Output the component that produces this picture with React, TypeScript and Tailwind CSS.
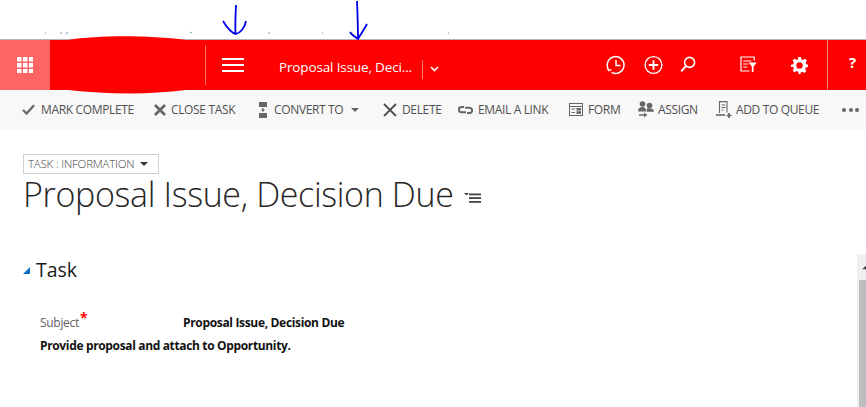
import React from "react";

const font = "font-['Open_Sans','Noto_Sans',sans-serif]";

function ToolItem({ icon, label, w, ml, iw, gap = "mr-[5px]" }: { icon: React.ReactNode; label: string; w: string; ml: string; iw: string; gap?: string }) {
  return (
    <div className={`flex items-center shrink-0 ${ml}`}>
      <div className={`flex items-center justify-center shrink-0 ${iw} ${gap}`}>{icon}</div>
      <span className={`text-[12px] leading-[16px] text-[#505050] whitespace-nowrap tracking-[-0.35px] ${w}`}>{label}</span>
    </div>
  );
}

export default function App() {
  return (
    <div className={`relative w-[866px] h-[407px] overflow-hidden bg-white ${font}`}>
      {/* top strip */}
      <div className="h-[39px] bg-white" />
      <div className="h-px bg-[#b4b4b4]" />

      {/* nav bar */}
      <div className="flex h-[50px] bg-[#ff0000] text-white">
        <div className="flex w-[50px] items-center justify-center bg-[#ff6464]">
          <svg width="16" height="16" viewBox="0 0 16 16" fill="#fff">
            {[0, 6, 12].flatMap((x) => [0, 6, 12].map((y) => <rect key={`${x}-${y}`} x={x} y={y} width="4.5" height="4.5" />))}
          </svg>
        </div>
        <div className="w-[155px]" />
        <div className="my-[5px] w-px bg-[#ff6a6a]" />
        <div className="ml-[16px] flex w-[22px] flex-col gap-[4px] pt-[18px]">
          <div className="h-[2px] bg-white" />
          <div className="h-[2px] bg-white" />
          <div className="h-[2px] bg-white" />
        </div>
        <div className="ml-[35px] w-[143px] pt-[17px] text-[13.5px] leading-[20px] tracking-[-0.15px] whitespace-nowrap">Proposal Issue, Deci...</div>
        <div className="mt-[20px] mb-[11px] w-px bg-[#ff7a7a]" />
        <div className="ml-[7px] pt-[26px]">
          <svg width="9" height="6" viewBox="0 0 9 6" fill="none" stroke="#fff" strokeWidth="1.6"><path d="M1 1l3.5 3.5L8 1" /></svg>
        </div>
        <div className="ml-[167px] pt-[15px]">
          <svg width="20" height="20" viewBox="0 0 20 20" fill="none" stroke="#fff" strokeWidth="1.5">
            <path d="M3 15.2A8.4 8.4 0 1 1 5.6 17.4" />
            <path d="M10 5v5.5h4.5" />
            <path d="M1.3 13.6l1.8 2.2 2.4-1.4" strokeWidth="1.2" />
          </svg>
        </div>
        <div className="ml-[18px] pt-[15px]">
          <svg width="19" height="20" viewBox="0 0 19 20" fill="none" stroke="#fff" strokeWidth="1.4">
            <circle cx="9.5" cy="10" r="8.4" />
            <path d="M4.8 10h9.4M9.5 5.3v9.4" strokeWidth="1.9" />
          </svg>
        </div>
        <div className="ml-[17px] pt-[16px]">
          <svg width="16" height="17" viewBox="0 0 16 17" fill="none" stroke="#fff" strokeWidth="1.6">
            <circle cx="9.6" cy="6.4" r="5" />
            <path d="M6 10L1.2 15.4" strokeWidth="2" />
          </svg>
        </div>
        <div className="ml-[44px] pt-[16px]">
          <svg width="17" height="17" viewBox="0 0 17 17" fill="none" stroke="#fff" strokeWidth="1.2">
            <path d="M14.2 4.5V1H1v14h8.5" />
            <path d="M3.2 5h8M3.2 8h5M3.2 11h4" />
            <path d="M8.6 6.5h8.2l-3.2 4v5l-1.8 1v-6z" fill="#fff" stroke="none" />
          </svg>
        </div>
        <div className="ml-[34px] pt-[17px]">
          <svg width="17" height="17" viewBox="0 0 24 24" fill="#fff">
            <path fillRule="evenodd" d="M10 0h4l.7 3.2 2.2.9L19.7 2.3l2.8 2.8-1.8 2.8.9 2.2L24 10.8v3.4l-3.2.7-.9 2.2 1.8 2.8-2.8 2.8-2.8-1.8-2.2.9L13.2 24h-2.4l-.7-3.2-2.2-.9-2.8 1.8-2.8-2.8 1.8-2.8-.9-2.2L0 14.2v-3.4l3.2-.7.9-2.2-1.8-2.8 2.8-2.8 2.8 1.8 2.2-.9zM12 7.5a4.5 4.5 0 1 0 0 9 4.5 4.5 0 0 0 0-9z" />
          </svg>
        </div>
        <div className="ml-[19px] w-px bg-[#ff7a7a]" />
        <div className="ml-[21px] pt-[12px] text-[15px] font-bold leading-[20px]">?</div>
      </div>

      {/* command bar */}
      <div className="flex h-[40px] items-center bg-[#f8f8f8] pb-[1px]">
        <ToolItem ml="ml-[22px]" iw="w-[13px]" gap="mr-[6px]" w="w-[94px]" label="MARK COMPLETE" icon={
          <svg width="13" height="11" viewBox="0 0 13 11" fill="none" stroke="#666" strokeWidth="2.2"><path d="M1 6l3.6 3.6L12 1.2" /></svg>} />
        <ToolItem ml="ml-[19px]" iw="w-[12px]" w="w-[67px]" label="CLOSE TASK" icon={
          <svg width="12" height="12" viewBox="0 0 12 12" stroke="#666" strokeWidth="2.8"><path d="M1 1l10 10M11 1L1 11" /></svg>} />
        <ToolItem ml="ml-[21px]" iw="w-[8px]" gap="mr-[7px]" w="w-[72px]" label="CONVERT TO" icon={
          <svg width="8" height="16" viewBox="0 0 8 16" fill="#666"><rect width="8" height="5" /><rect y="11" width="8" height="5" /><path d="M2 7.5h4L4 10z" /><rect x="3.4" y="6" width="1.2" height="2" /></svg>} />
        <svg className="ml-[5px]" width="8" height="4" viewBox="0 0 8 4" fill="#666"><path d="M0 0h8L4 4z" /></svg>
        <ToolItem ml="ml-[24px]" iw="w-[14px]" w="w-[39px]" label="DELETE" icon={
          <svg width="14" height="14" viewBox="0 0 14 14" stroke="#505050" strokeWidth="1.8"><path d="M1 1l12 12M13 1L1 13" /></svg>} />
        <ToolItem ml="ml-[17px]" iw="w-[15px]" w="w-[73px]" label="EMAIL A LINK" icon={
          <svg width="15" height="8" viewBox="0 0 15 8" fill="none" stroke="#666" strokeWidth="2"><path d="M6 1H3.5a2.6 2.6 0 0 0 0 5.2H8M7 1.8h4.5a2.6 2.6 0 0 1 0 5.2H9" /></svg>} />
        <ToolItem ml="ml-[18px]" iw="w-[14px]" w="w-[33px]" label="FORM" icon={
          <svg width="14" height="13" viewBox="0 0 14 13" fill="none" stroke="#666" strokeWidth="1"><rect x=".5" y=".5" width="13" height="12" /><path d="M.5 3.5h13" /><path d="M2.5 6h3.5M2.5 9.5h3.5" /><rect x="8" y="5.5" width="3.5" height="1.5" fill="#666" /><rect x="8" y="8.8" width="3.5" height="1.5" fill="#666" /></svg>} />
        <ToolItem ml="ml-[17px]" iw="w-[16px]" gap="mr-[4px]" w="w-[41px]" label="ASSIGN" icon={
          <svg width="16" height="17" viewBox="0 0 16 17" fill="#666"><circle cx="4.5" cy="3" r="2.8" /><circle cx="11.5" cy="4.5" r="2.8" /><path d="M0 10.5c0-3 2-4.4 4.5-4.4S8 7.4 8 10.5zM8.5 7.8c1-.6 2-.6 3-.6 2.4 0 4.5 1 4.5 3.6H8.8z" /><path d="M1 13.2h5v-1.8l3.4 2.6-3.4 2.6v-1.8H1z" /></svg>} />
        <ToolItem ml="ml-[17px]" iw="w-[16px]" gap="mr-[4px]" w="w-[85px]" label="ADD TO QUEUE" icon={
          <svg width="16" height="17" viewBox="0 0 16 17" fill="none" stroke="#666" strokeWidth="1.1"><path d="M3.5 12V.6h7.5v11" /><path d="M5.5 4h4M5.5 6.5h4M5.5 9h2" /><path d="M0 14h9" strokeWidth="1.6" /><path d="M10.5 14.5h5M13 12v5" strokeWidth="1.7" /></svg>} />
        <div className="ml-[21px] flex gap-[2.5px]">
          <div className="h-[4px] w-[4px] rounded-full bg-[#666]" />
          <div className="h-[4px] w-[4px] rounded-full bg-[#666]" />
          <div className="h-[4px] w-[4px] rounded-full bg-[#666]" />
        </div>
      </div>

      {/* form */}
      <div className="pl-[23px] pt-[24px]">
        <div className="flex h-[20px] w-[136px] items-center border border-[#d0d0d0] pl-[4px]">
          <span className="text-[11.5px] font-light leading-[16px] text-[#444] whitespace-nowrap tracking-[-0.2px]">TASK : INFORMATION</span>
          <svg className="ml-[6px]" width="8" height="4" viewBox="0 0 8 4" fill="#333"><path d="M0 0h8L4 4z" /></svg>
        </div>
        <div className="-mt-[4px] flex items-start">
          <div className="text-[34px] font-light leading-[48px] tracking-[-0.35px] text-[#262626] whitespace-nowrap">Proposal Issue, Decision Due</div>
          <svg className="ml-[10px] mt-[23px]" width="17" height="10" viewBox="0 0 17 10" fill="#444">
            <path d="M0 0h5L2.5 2.5z" />
            <rect x="5" y="0.5" width="12" height="1.8" /><rect x="5" y="4.2" width="12" height="1.8" /><rect x="5" y="8" width="12" height="1.8" />
          </svg>
        </div>
        <div className="mt-[38px] flex items-center">
          <svg className="mt-[1px]" width="7" height="7" viewBox="0 0 7 7" fill="#0f6fc6"><path d="M7 0v7H0z" /></svg>
          <div className="ml-[6px] text-[19.5px] leading-[28px] text-[#1a1a1a]">Task</div>
        </div>
        <div className="ml-[17px] mt-[29px] flex h-[20px] items-center">
          <div className="w-[143px] text-[12px] leading-[16px] text-[#5f5f5f] tracking-[-0.3px]">
            Subject<span className="relative -top-[4px] ml-[1px] text-[14px] font-bold leading-[10px] text-[#ff0000]">*</span>
          </div>
          <div className="text-[12px] font-bold leading-[16px] text-[#111] tracking-[-0.33px] whitespace-nowrap">Proposal Issue, Decision Due</div>
        </div>
        <div className="ml-[17px] mt-[5px] text-[12px] font-bold leading-[16px] text-[#111] tracking-[-0.35px] whitespace-nowrap">Provide proposal and attach to Opportunity.</div>
      </div>

      {/* scrollbar at the window edge */}
      <div className="absolute right-0 top-[254px] bottom-0 w-[9px] bg-[#f0f0f0] pl-[2px]">
        <div className="flex h-[26px] items-center pl-[3px]">
          <svg width="6" height="5" viewBox="0 0 6 5" fill="#444"><path d="M6 0v5H0z" /></svg>
        </div>
        <div className="h-[127px] bg-[#bdbdbd]" />
      </div>

      {/* hand-drawn overlays */}
      <svg className="absolute left-0 top-0" width="866" height="100" viewBox="0 0 866 100" fill="none">
        <path d="M236 5c-.5 10-1 20-.5 29M223 21c3 5 8 12 13 13 4-1 9-6 10-13" stroke="#0000e6" strokeWidth="1.8" />
        <path d="M357 1c.5 12 1 26 1 38M350 32c2 3 5 5 8 7 2-4 6-9 9-15" stroke="#0000e6" strokeWidth="1.8" />
        <path d="M68 40c30-5 80-5 118 0v50c-40 5-80 4-118 0z" fill="#ff0000" />
        <path d="M45 33h1M60 33h2M66 33h2M190 33l2-1M268 33h2M322 33h1M448 33h1" stroke="#6a9ab0" strokeWidth="1" />
      </svg>
    </div>
  );
}
